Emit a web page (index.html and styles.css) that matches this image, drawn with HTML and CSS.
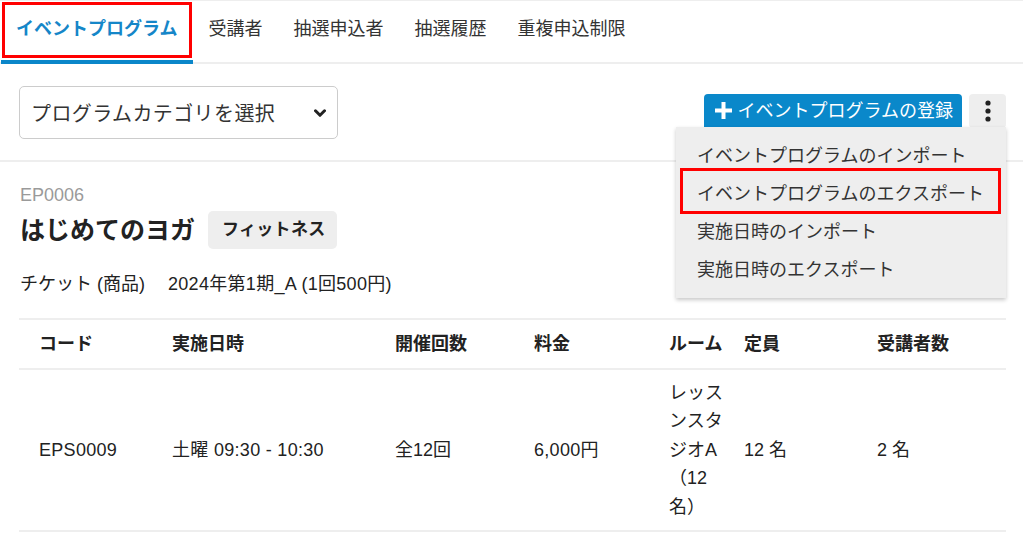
FILE: index.html
```html
<!DOCTYPE html>
<html lang="ja">
<head>
<meta charset="utf-8">
<title>イベントプログラム</title>
<link rel="stylesheet" href="styles.css">
</head>
<body>
<nav class="tabs">
  <a class="tab active">イベントプログラム<span class="mark mark-tab"></span></a>
  <a class="tab">受講者</a>
  <a class="tab">抽選申込者</a>
  <a class="tab">抽選履歴</a>
  <a class="tab">重複申込制限</a>
</nav>

<section class="toolbar">
  <div class="select">
    <span>プログラムカテゴリを選択</span>
    <svg class="chev" width="12" height="9" viewBox="0 0 12 9"><path d="M1.5 1.8 L6 6.3 L10.5 1.8" fill="none" stroke="#222" stroke-width="3" stroke-linecap="round" stroke-linejoin="round"/></svg>
  </div>
  <div class="actions">
    <button class="btn-primary">
      <svg class="plus" width="17" height="17" viewBox="0 0 17 17"><rect x="6.5" y="0" width="4" height="17" fill="#fff"/><rect x="0" y="6.5" width="17" height="4" fill="#fff"/></svg>
      <span>イベントプログラムの登録</span>
    </button>
    <button class="btn-kebab">
      <svg width="8" height="22" viewBox="0 0 8 22"><circle cx="4" cy="3" r="2.6" fill="#222"/><circle cx="4" cy="11" r="2.6" fill="#222"/><circle cx="4" cy="19" r="2.6" fill="#222"/></svg>
    </button>
    <div class="menu">
      <div class="menu-item">イベントプログラムのインポート</div>
      <div class="menu-item">イベントプログラムのエクスポート</div>
      <div class="menu-item">実施日時のインポート</div>
      <div class="menu-item">実施日時のエクスポート</div>
      <span class="mark mark-menu"></span>
    </div>
  </div>
</section>

<main class="content">
  <div class="code">EP0006</div>
  <div class="title-row">
    <h1 class="title">はじめてのヨガ</h1>
    <span class="tag">フィットネス</span>
  </div>
  <div class="ticket"><span class="ticket-label">チケット (商品)</span><span class="latin">2024年第1期_A (1回500円)</span></div>

  <table class="table">
    <colgroup>
      <col style="width:133px"><col style="width:223px"><col style="width:139px"><col style="width:135px"><col style="width:75px"><col style="width:133px"><col style="width:149px">
    </colgroup>
    <thead>
      <tr><th>コード</th><th>実施日時</th><th>開催回数</th><th>料金</th><th>ルーム</th><th>定員</th><th>受講者数</th></tr>
    </thead>
    <tbody>
      <tr><td class="latin">EPS0009</td><td class="latin">土曜 09:30 - 10:30</td><td>全12回</td><td class="latin">6,000円</td><td class="room">レッスンスタジオA（12名）</td><td>12 名</td><td>2 名</td></tr>
    </tbody>
  </table>
</main>
</body>
</html>
```

FILE: styles.css
```css
* { box-sizing: border-box; }
html, body { margin: 0; padding: 0; background: #fff; }
body {
  font-family: "Liberation Sans", "Noto Sans CJK JP", sans-serif;
  color: #333;
  font-size: 18px;
  width: 1023px;
}

.tabs {
  display: flex;
  border-top: 1px solid #eee;
  border-bottom: 2px solid #eee;
  padding-left: 1px;
}
.tab {
  position: relative;
  display: block;
  padding: 16px 15.5px 19px;
  line-height: 24px;
  font-size: 18px;
  color: #333;
  border-bottom: 4px solid transparent;
  margin-bottom: -2px;
}
.tab.active {
  padding-left: 15px;
  color: #1586c8;
  font-weight: bold;
  border-bottom-color: #0a86c9;
}
.mark {
  position: absolute;
  border: 3px solid #f00;
  pointer-events: none;
}
.mark-tab { top: 1px; left: 1px; width: 190px; height: 56px; }

.toolbar {
  display: flex;
  justify-content: space-between;
  align-items: flex-start;
  padding: 22px 17px 21px 19px;
  border-bottom: 2px solid #eee;
}
.select {
  width: 319px;
  height: 53px;
  border: 1px solid #ccc;
  border-radius: 5px;
  display: flex;
  align-items: center;
  justify-content: space-between;
  padding: 0 11px 0 11px;
  font-size: 20px;
  letter-spacing: 0.4px;
  color: #333;
}
.chev { margin-top: 1px; }

.actions {
  position: relative;
  display: flex;
  align-items: flex-start;
  margin-top: 8px;
}
.btn-primary {
  display: flex;
  align-items: center;
  gap: 6px;
  height: 33px;
  padding: 0 9px 0 11px;
  background: #0a88ca;
  color: #fff;
  border: none;
  border-radius: 4px 4px 0 0;
  font-family: inherit;
  font-size: 18px;
  letter-spacing: 0;
  line-height: 1;
}
.btn-kebab {
  margin-left: 7px;
  width: 37px;
  height: 34px;
  background: #eee;
  border: none;
  border-radius: 4px;
  display: flex;
  align-items: center;
  justify-content: center;
  padding: 0;
}
.menu {
  position: absolute;
  right: 0;
  top: 33px;
  width: 330px;
  background: #eee;
  padding: 10px 0 9px;
  box-shadow: 0 2px 4px rgba(0,0,0,0.22);
}
.menu-item {
  height: 38px;
  line-height: 38px;
  padding-left: 21px;
  font-size: 18px;
  color: #333;
}
.mark-menu { left: 4px; top: 41px; width: 321px; height: 46px; }

.content { padding: 0 17px 0 19px; }
.code {
  margin-top: 22px;
  font-size: 18px;
  line-height: 22px;
  color: #9a9a9a;
  padding-left: 1px;
}
.title-row {
  display: flex;
  align-items: center;
  gap: 12px;
  margin-top: 5px;
  height: 38px;
}
.title {
  margin: 0;
  font-size: 25px;
  font-weight: bold;
  color: #222;
  line-height: 38px;
  padding-left: 1px;
}
.tag {
  background: #eee;
  border-radius: 5px;
  height: 38px;
  line-height: 38px;
  padding: 0 12px 0 14px;
  margin-left: 1px;
  font-size: 17px;
  font-weight: bold;
  color: #222;
  letter-spacing: 0.3px;
}
.ticket {
  margin-top: 23px;
  line-height: 24px;
  font-size: 18px;
  color: #222;
  padding-left: 1px;
}
.ticket-label { margin-right: 23px; }
.latin { letter-spacing: 0.3px; }

.table {
  margin-top: 22px;
  width: 987px;
  table-layout: fixed;
  border-collapse: separate;
  border-spacing: 0;
  border-top: 2px solid #eee;
  color: #222;
}
.table th {
  text-align: left;
  font-weight: bold;
  font-size: 18px;
  height: 50px;
  padding: 0 0 4px 20px;
  border-bottom: 2px solid #eee;
  vertical-align: middle;
}
.table td {
  font-size: 18px;
  line-height: 28.6px;
  padding: 8px 0 8px 20px;
  height: 162px;
  border-bottom: 2px solid #eee;
  vertical-align: middle;
}
```
